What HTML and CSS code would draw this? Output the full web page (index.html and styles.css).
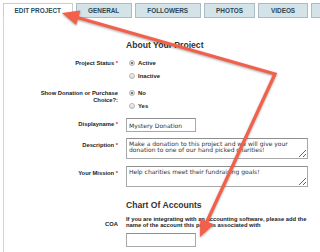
FILE: index.html
```html
<!DOCTYPE html>
<html>
<head>
<meta charset="utf-8">
<title>Edit Project</title>
<link rel="stylesheet" href="styles.css">
</head>

<body>

<div class="tabs">
  <div class="tab active">EDIT PROJECT</div>
  <div class="tab">GENERAL</div>
  <div class="tab">FOLLOWERS</div>
  <div class="tab">PHOTOS</div>
  <div class="tab">VIDEOS</div>
  <div class="tab stub"></div>
</div>

<div class="panel">

  <h2 class="section">About Your Project</h2>

  <div class="row row-status">
    <label class="lbl">Project Status <span class="req">*</span></label>
    <div class="field">
      <div class="opt"><span class="radio on"></span>Active</div>
      <div class="opt"><span class="radio"></span>Inactive</div>
    </div>
  </div>

  <div class="row row-choice">
    <label class="lbl lbl-wrap">Show Donation or Purchase Choice?:</label>
    <div class="field">
      <div class="opt"><span class="radio on"></span>No</div>
      <div class="opt"><span class="radio"></span>Yes</div>
    </div>
  </div>

  <div class="row row-name">
    <label class="lbl">Displayname <span class="req">*</span></label>
    <div class="field">
      <input class="text" type="text" value="Mystery Donation">
    </div>
  </div>

  <div class="row row-desc">
    <label class="lbl lbl-top">Description <span class="req">*</span></label>
    <div class="field">
      <textarea class="area">Make a donation to this project and we will give your donation to one of our hand picked charities!</textarea>
    </div>
  </div>

  <div class="row row-mission">
    <label class="lbl lbl-top">Your Mission <span class="req">*</span></label>
    <div class="field">
      <textarea class="area">Help charities meet their fundraising goals!</textarea>
    </div>
  </div>

  <h2 class="section section-2">Chart Of Accounts</h2>

  <div class="row row-coa">
    <label class="lbl lbl-coa">COA</label>
    <div class="field">
      <p class="help">If you are integrating with an accounting software, please add the name of the account this page is associated with</p>
      <input class="text" type="text" value="">
    </div>
  </div>

</div>

<!-- callout arrows drawn over the form -->
<svg class="arrows" width="320" height="252" viewBox="0 0 320 252">
  <path d="M72,16 L275,74 L204,228" stroke="#f2604a" stroke-width="3.2" fill="none" stroke-linejoin="miter"/>
  <polygon points="62,13 76.2,24.9 80.4,10.5" fill="#f2604a"/>
  <polygon points="200,237 213.9,224.6 200.3,218.4" fill="#f2604a"/>
</svg>

</body>
</html>
```

FILE: styles.css
```css
body {
  margin: 0;
  width: 320px;
  height: 252px;
  overflow: hidden;
  position: relative;
  background: #fff;
  color: #222;
  font-family: "Liberation Sans", Arial, sans-serif;
}

.tabs {
  display: flex;
  gap: 3px;
  padding: 3px 0 0 3px;
  white-space: nowrap;
  overflow: hidden;
}

.tab {
  flex-shrink: 0;
  height: 15px;
  box-sizing: border-box;
  padding: 0 11.5px;
  border: 1px solid #aabdc5;
  background-color: #d4e3e8;
  color: #2a4654;
  font-size: 6.4px;
  font-weight: bold;
  line-height: 13px;
}

.tab.active {
  padding: 0 10.5px;
  background-color: #fff;
  border-color: #ccc;
  border-bottom-color: #fff;
  color: #2b4a5a;
}

.tab.stub {
  flex-shrink: 1;
  width: 30px;
}

.panel {
  margin-left: 3px;
  border-left: 1px solid #d3d3d3;
  height: 234px;
  box-sizing: border-box;
  padding-top: 22px;
  overflow: hidden;
}

.section {
  margin: 0 0 0 122px;
  font-size: 8.6px;
  line-height: 10px;
  font-weight: bold;
  color: #333;
}

.section-2 {
  margin-top: 13px;
}

.row {
  display: grid;
  grid-template-columns: 114px 1fr;
  column-gap: 8px;
}

.lbl {
  text-align: right;
  font-size: 5.8px;
  font-weight: bold;
  line-height: 12.5px;
  color: #222;
}

.req {
  color: #e0201c;
}

.lbl-wrap {
  line-height: 6.7px;
  padding-top: 3px;
  padding-left: 20px;
}

.lbl-top {
  line-height: 6.7px;
  padding-top: 3.5px;
}

.lbl-coa {
  line-height: 6.7px;
  padding-top: 5.5px;
}

.row-status {
  margin-top: 7px;
}

.row-choice {
  margin-top: 5px;
}

.row-choice .opt {
  line-height: 12px;
}

.row-name {
  margin-top: 6px;
}

.row-desc {
  margin-top: 6px;
}

.row-mission {
  margin-top: 7px;
}

.row-coa {
  margin-top: 5.5px;
}

.opt {
  display: flex;
  align-items: center;
  height: 12.5px;
  font-size: 5.9px;
  font-weight: bold;
  color: #222;
}

.radio {
  width: 6px;
  height: 6px;
  box-sizing: border-box;
  margin: 0 3px 0 3px;
  border-radius: 50%;
  border: 1px solid #b4b4b4;
  background: linear-gradient(#f4f4f4, #d9d9d9);
  display: flex;
  align-items: center;
  justify-content: center;
}

.radio.on::after {
  content: "";
  width: 2.4px;
  height: 2.4px;
  border-radius: 50%;
  background-color: #555;
}

.text,
.area {
  display: block;
  box-sizing: border-box;
  margin: 0;
  border: 1px solid #a9a9a9;
  border-top-color: #8e8e8e;
  background: #fff;
  color: #333;
  font-family: "DejaVu Sans", Verdana, sans-serif;
  font-size: 6px;
}

.text {
  width: 70px;
  height: 14px;
  padding: 0 2px;
}

.area {
  width: 182px;
  height: 21px;
  padding: 2px 2px;
  line-height: 6.4px;
  resize: both;
  overflow: hidden;
}

.help {
  margin: 0 0 4px 0;
  font-size: 5.8px;
  line-height: 6.7px;
  font-weight: bold;
  color: #222;
}

.arrows {
  position: absolute;
  left: 0;
  top: 0;
  pointer-events: none;
  filter: drop-shadow(0.8px 1px 0.8px rgba(0, 0, 0, 0.35));
}
```
